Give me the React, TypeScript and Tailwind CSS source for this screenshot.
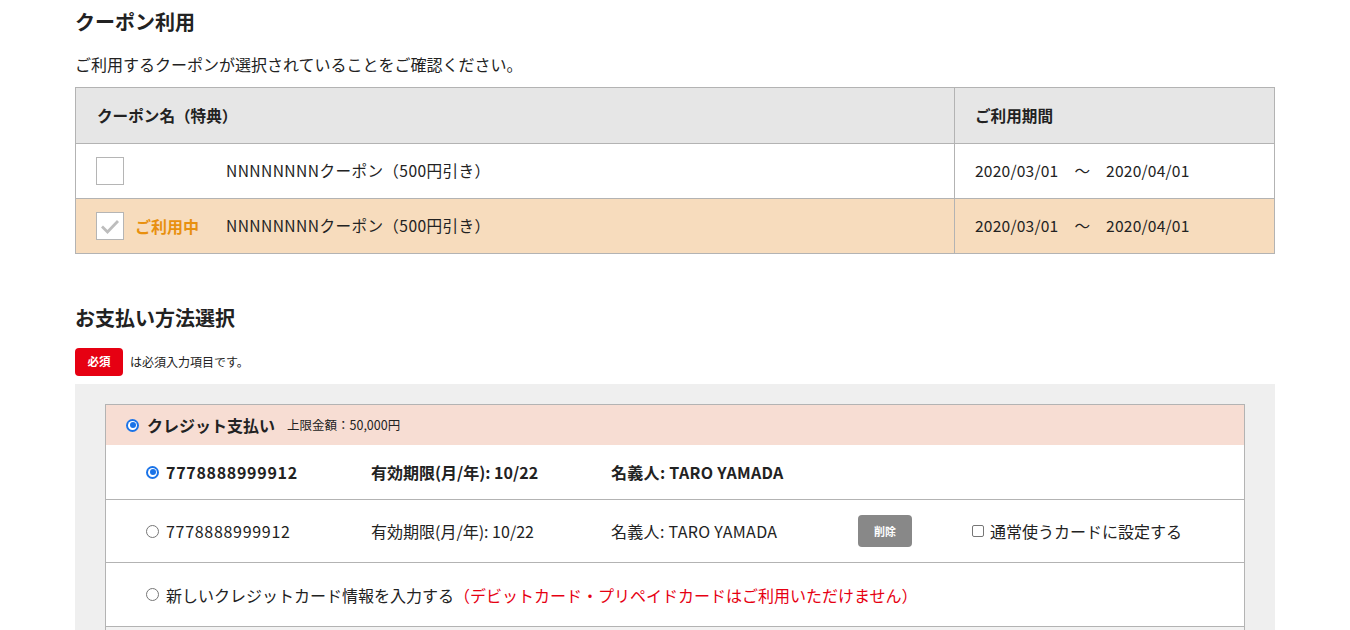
const font = "font-['Noto_Sans_CJK_JP','Noto_Sans',sans-serif]";

const coupons = [
  { name: "NNNNNNNNクーポン（500円引き）", from: "2020/03/01", to: "2020/04/01", active: false },
  { name: "NNNNNNNNクーポン（500円引き）", from: "2020/03/01", to: "2020/04/01", active: true },
];

function Radio({ checked }: { checked?: boolean }) {
  if (checked) {
    return (
      <span className="w-[13px] h-[13px] rounded-full bg-[#1a73e8] flex items-center justify-center shrink-0">
        <span className="w-[9px] h-[9px] rounded-full bg-white flex items-center justify-center">
          <span className="w-[6px] h-[6px] rounded-full bg-[#1a73e8]" />
        </span>
      </span>
    );
  }
  return <span className="w-[13px] h-[13px] rounded-full border border-[#767676] bg-white shrink-0" />;
}

function CouponCheck({ checked }: { checked?: boolean }) {
  return (
    <span className="w-[28px] h-[28px] border border-[#b5b5b5] bg-white flex items-center justify-center shrink-0">
      {checked && (
        <svg width="20" height="15" viewBox="0 0 20 15">
          <path d="M2 7.5 L7.5 13 L18 2" fill="none" stroke="#bdbdbd" strokeWidth="2.8" />
        </svg>
      )}
    </span>
  );
}

export default function App() {
  return (
    <div className={`w-full bg-white text-[#222] ${font}`}>
      <div className="w-[1200px] mx-auto pt-[10px] pb-10">
        <h2 className="text-[20px] leading-[24px] font-bold">クーポン利用</h2>
        <p className="mt-[20px] text-[16px] leading-[20px]">ご利用するクーポンが選択されていることをご確認ください。</p>

        <div className="mt-[13px] border border-[#b3b3b3] text-[15.6px]">
          <div className="grid grid-cols-[879px_1fr] bg-[#e6e6e6] h-[55px] font-bold">
            <div className="flex items-center pl-[21px] border-r border-[#b3b3b3]">クーポン名（特典）</div>
            <div className="flex items-center pl-[20px]">ご利用期間</div>
          </div>
          {coupons.map((c, i) => (
            <div
              key={i}
              className={`grid grid-cols-[879px_1fr] h-[55px] border-t border-[#b3b3b3] ${c.active ? "bg-[#f7dcbd]" : "bg-white"}`}
            >
              <div className="flex items-center pl-[20px] border-r border-[#b3b3b3]">
                <div className="w-[130px] flex items-center gap-[11px]">
                  <CouponCheck checked={c.active} />
                  {c.active && <span className="text-[#e8900f] font-bold text-[16px]">ご利用中</span>}
                </div>
                <span className="tracking-[0.4px]">{c.name}</span>
              </div>
              <div className="flex items-center pl-[20px]">
                <span className="tracking-[0.2px]">{c.from}</span>
                <span className="mx-[16px]">〜</span>
                <span className="tracking-[0.2px]">{c.to}</span>
              </div>
            </div>
          ))}
        </div>

        <h2 className="mt-[52px] text-[20px] leading-[24px] font-bold">お支払い方法選択</h2>
        <div className="mt-[18px] flex items-center gap-[7px]">
          <span className="w-[48px] h-[28px] rounded-[4px] bg-[#e60012] text-white text-[11.5px] font-bold flex items-center justify-center">必須</span>
          <span className="text-[12px]">は必須入力項目です。</span>
        </div>

        <div className="mt-[8px] bg-[#efefef] px-[30px] pt-[20px]">
          <div className="border border-[#b3b3b3] bg-white text-[16px]">
            <div className="h-[40px] bg-[#f7ddd3] flex items-center pl-[20px] gap-[8px]">
              <Radio checked />
              <span className="text-[16px] font-bold">クレジット支払い</span>
              <span className="text-[12.5px] ml-[4px]">上限金額：50,000円</span>
            </div>

            <div className="h-[55px] pl-[40px] grid grid-cols-[225px_240px_247px_114px_1fr] items-center font-bold border-b border-[#b3b3b3]">
              <div className="flex items-center gap-[7px]">
                <Radio checked />
                <span className="tracking-[0.7px]">7778888999912</span>
              </div>
              <span>有効期限(月/年): 10/22</span>
              <span className="tracking-[0.3px]">名義人: TARO YAMADA</span>
            </div>

            <div className="h-[63px] pl-[40px] grid grid-cols-[225px_240px_247px_114px_1fr] items-center border-b border-[#b3b3b3]">
              <div className="flex items-center gap-[7px]">
                <Radio />
                <span className="tracking-[0.7px]">7778888999912</span>
              </div>
              <span>有効期限(月/年): 10/22</span>
              <span className="tracking-[0.3px]">名義人: TARO YAMADA</span>
              <div>
                <span className="w-[54px] h-[32px] rounded-[4px] bg-[#888] text-white text-[11px] font-bold flex items-center justify-center">削除</span>
              </div>
              <div className="flex items-center gap-[6px]">
                <span className="w-[12px] h-[12px] rounded-[2px] border border-[#767676] bg-white" />
                <span>通常使うカードに設定する</span>
              </div>
            </div>

            <div className="h-[64px] pl-[40px] flex items-center gap-[7px] border-b border-[#b3b3b3]">
              <Radio />
              <span>新しいクレジットカード情報を入力する<span className="text-[#e60012]">（デビットカード・プリペイドカードはご利用いただけません）</span></span>
            </div>
            <div className="h-[40px] bg-[#f2f2f2]" />
          </div>
        </div>
      </div>
    </div>
  );
}
